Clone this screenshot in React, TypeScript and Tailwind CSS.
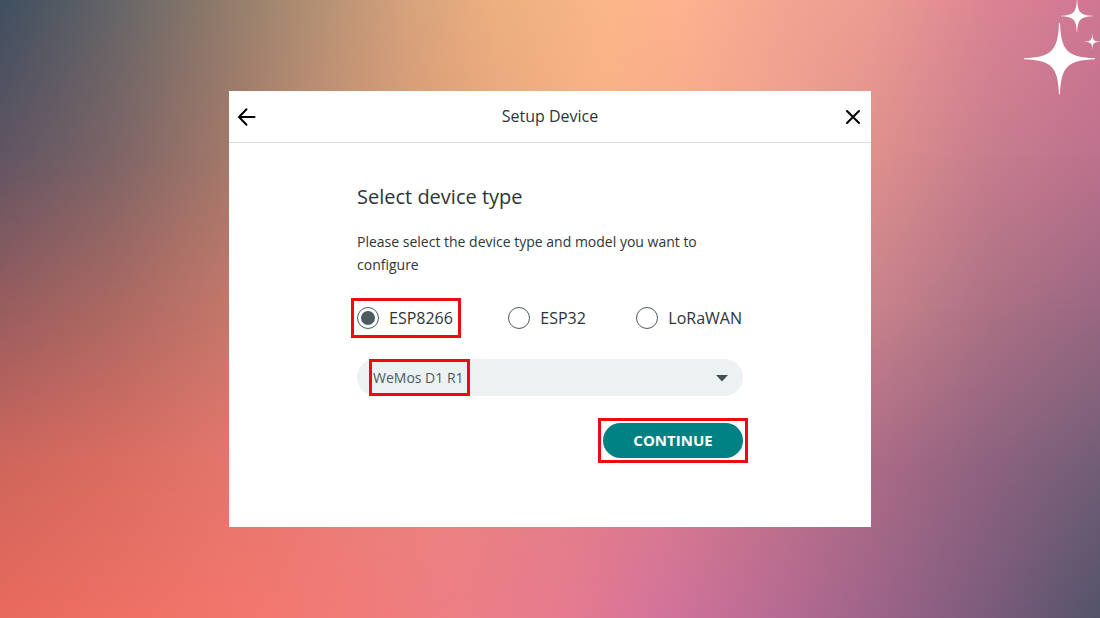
import { useState } from "react";

const models = ["WeMos D1 R1", "NodeMCU 1.0", "Generic ESP8266"];
const types = ["ESP8266", "ESP32", "LoRaWAN"];

function Backdrop() {
  return (
    <div aria-hidden="true" className="absolute inset-0 -z-10 overflow-hidden">
      <div className="absolute inset-0 bg-[linear-gradient(to_right,#3f4f60_0%,#636467_10%,#8f7b6b_20%,#b08f73_28%,#d6a27c_37%,#edb080_45%,#fab688_55%,#ffb28f_62%,#f3a592_71%,#ee9d92_79%,#dc8494_90%,#d07794_100%)]" />
      <div className="absolute inset-0 bg-[linear-gradient(to_right,#605563_0%,#7b6466_10%,#a3796a_21%,#c48f73_30%,#e0a078_40%,#f9b086_55%,#f0a08e_70%,#df918c_79%,#c77d8e_90%,#be718d_100%)] [mask-image:linear-gradient(to_bottom,transparent_0%,black_25%)]" />
      <div className="absolute inset-0 bg-[linear-gradient(to_right,#985d5f_0%,#ab6862_10%,#c4776a_21%,#d48a70_40%,#e39080_60%,#c9838c_79%,#ac7184_90%,#9a6782_100%)] [mask-image:linear-gradient(to_bottom,transparent_25%,black_50%)]" />
      <div className="absolute inset-0 bg-[linear-gradient(to_right,#cf665c_0%,#da6c61_10%,#e4766d_21%,#ec8480_40%,#dc7c8c_60%,#ad6b86_79%,#8d627f_90%,#725e76_100%)] [mask-image:linear-gradient(to_bottom,transparent_50%,black_75%)]" />
      <div className="absolute inset-0 bg-[linear-gradient(to_right,#e86a5c_0%,#ee7165_12%,#f3766d_22%,#f17b77_31%,#ec7e85_42%,#e57a90_52%,#d3739b_60%,#b96b93_70%,#9b6388_80%,#7a5b7b_90%,#53536a_100%)] [mask-image:linear-gradient(to_bottom,transparent_75%,black_100%)]" />
    </div>
  );
}

const star =
  "M-.5 -35.500H.5C1.500 -8 8 -1.500 35.500 -.5V.5C8 1.500 1.500 8 .5 35.500H-.5C-1.500 8 -8 1.500 -35.500 .5V-.5C-8 -1.500 -1.500 -8 -.5 -35.500Z";

function Sparkles() {
  return (
    <svg aria-hidden="true" viewBox="0 0 80 100" className="absolute top-0 right-0 h-[100px] w-20 fill-white">
      <path d={star} transform="translate(39.500 58.700)" />
      <path d={star} transform="translate(57 16) scale(0.450)" />
      <path d={star} transform="translate(72.300 41.700) scale(0.210)" />
    </svg>
  );
}

export default function App() {
  const [type, setType] = useState("ESP8266");
  return (
    <div className="relative isolate flex min-h-screen items-center justify-center font-['Open_Sans',sans-serif] text-[#2c353a]">
      <Backdrop />
      <Sparkles />
      <main className="w-full max-w-[642px] bg-white pb-16">
        <header className="flex h-[52px] items-center justify-between border-b border-[#d5dddd] px-2">
          <button type="button" aria-label="Back">
            <svg viewBox="0 0 20 20" className="size-5 fill-none stroke-black stroke-2" strokeLinecap="round">
              <path d="M17.500 10H2.500M9.500 2.200L2 10L9.500 17.800" />
            </svg>
          </button>
          <h1 className="pb-0.5 text-base">Setup Device</h1>
          <button type="button" aria-label="Close">
            <svg viewBox="0 0 20 20" className="size-5 fill-none stroke-black stroke-2" strokeLinecap="round">
              <path d="M4 4L16 16M16 4L4 16" />
            </svg>
          </button>
        </header>
        <form className="mx-auto flex w-full max-w-[386px] flex-col pt-10" onSubmit={(e) => e.preventDefault()}>
          <h2 className="text-xl leading-7">Select device type</h2>
          <p className="mt-[19px] text-sm leading-[23px]">Please select the device type and model you want to configure</p>
          <fieldset aria-label="Device type" className="mt-[22px] -ml-1.5 mr-px flex items-center justify-between">
            {types.map((name) => (
              <label
                key={name}
                className="flex h-10 items-center gap-2.5 border-3 border-transparent text-base first:border-[#ee0a14] first:pr-[5px] first:pl-[3px] last:border-r-0"
              >
                <input
                  type="radio"
                  name="type"
                  value={name}
                  checked={type === name}
                  onChange={() => setType(name)}
                  className="size-[22px] appearance-none rounded-full border border-[#4e5b61] bg-white bg-clip-content p-[3px] checked:bg-[#4e5b61]"
                />
                {name}
              </label>
            ))}
          </fieldset>
          <div className="relative mt-[21px] h-[37px]">
            <select
              aria-label="Device model"
              className="h-full w-full appearance-none rounded-full bg-[#ecf1f1] px-4 text-sm text-[#4e5b61]"
            >
              {models.map((model) => (
                <option key={model}>{model}</option>
              ))}
            </select>
            <div className="pointer-events-none absolute inset-y-0 left-3 w-[101px] border-3 border-[#ee0a14]" />
            <svg viewBox="0 0 12 7" aria-hidden="true" className="pointer-events-none absolute top-4 right-[15px] h-[7px] w-3 fill-[#434f54]">
              <path d="M0 0H12L6 6.500Z" />
            </svg>
          </div>
          <div className="-mr-[5px] mt-[22px] self-end border-3 border-[#ee0a14] p-0.5">
            <button type="submit" className="flex h-[35px] w-[140px] items-center justify-center rounded-full bg-[#008184] text-[15px] font-bold text-white">
              CONTINUE
            </button>
          </div>
        </form>
      </main>
    </div>
  );
}
